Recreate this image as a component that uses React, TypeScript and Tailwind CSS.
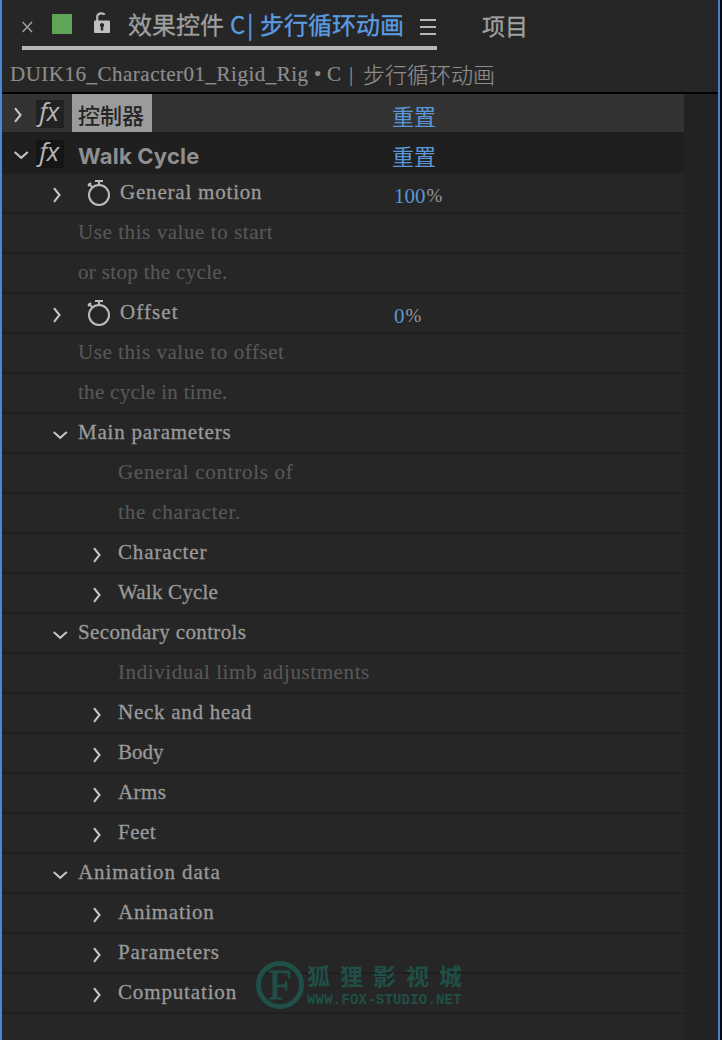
import type { ReactNode } from 'react';

interface Param {
  label: string;
  level: 1 | 2;
  tracking: string;
  arrow?: 'right' | 'down';
  value?: string;
}

const params: Param[] = [
  { label: 'General motion', level: 1, arrow: 'right', value: '100', tracking: 'tracking-[0.8px]' },
  { label: 'Use this value to start', level: 1, tracking: 'tracking-[0.57px]' },
  { label: 'or stop the cycle.', level: 1, tracking: 'tracking-[0.34px]' },
  { label: 'Offset', level: 1, arrow: 'right', value: '0', tracking: 'tracking-[1.1px]' },
  { label: 'Use this value to offset', level: 1, tracking: 'tracking-[0.55px]' },
  { label: 'the cycle in time.', level: 1, tracking: 'tracking-[0.28px]' },
  { label: 'Main parameters', level: 1, arrow: 'down', tracking: 'tracking-[0.78px]' },
  { label: 'General controls of', level: 2, tracking: 'tracking-[0.7px]' },
  { label: 'the character.', level: 2, tracking: 'tracking-[0.8px]' },
  { label: 'Character', level: 2, arrow: 'right', tracking: 'tracking-[0.85px]' },
  { label: 'Walk Cycle', level: 2, arrow: 'right', tracking: 'tracking-[0.2px]' },
  { label: 'Secondary controls', level: 1, arrow: 'down', tracking: 'tracking-[0.38px]' },
  { label: 'Individual limb adjustments', level: 2, tracking: 'tracking-[0.6px]' },
  { label: 'Neck and head', level: 2, arrow: 'right', tracking: 'tracking-[0.73px]' },
  { label: 'Body', level: 2, arrow: 'right', tracking: 'tracking-[0px]' },
  { label: 'Arms', level: 2, arrow: 'right', tracking: 'tracking-[0.4px]' },
  { label: 'Feet', level: 2, arrow: 'right', tracking: 'tracking-[0.5px]' },
  { label: 'Animation data', level: 1, arrow: 'down', tracking: 'tracking-[0.9px]' },
  { label: 'Animation', level: 2, arrow: 'right', tracking: 'tracking-[0.75px]' },
  { label: 'Parameters', level: 2, arrow: 'right', tracking: 'tracking-[0.85px]' },
  { label: 'Computation', level: 2, arrow: 'right', tracking: 'tracking-[0.85px]' },
];

function Chevron({ dir }: { dir: 'right' | 'down' }) {
  return (
    <svg className="h-4 w-4 shrink-0" viewBox="0 0 16 16" fill="none" stroke="#c4c4c4" strokeWidth="2.1">
      <path d={dir === 'right' ? 'M1 1.2 L6.5 8 L1 14.8' : 'M0.6 5 L7.2 10.8 L13.8 5'} />
    </svg>
  );
}

function Stopwatch() {
  return (
    <svg className="h-7 w-6 shrink-0" viewBox="0 0 24 28" fill="none" stroke="#bdbdbd" strokeWidth="2">
      <circle cx="12" cy="16" r="10" />
      <path d="M8 2 H16 M12 2 V6 M1.5 4.5 L4.8 7.8 M1 7 L4 4" />
    </svg>
  );
}

function FxBadge({ dark }: { dark?: boolean }) {
  return (
    <div
      className={`flex h-7 w-7 shrink-0 items-center justify-center font-['Open_Sans'] text-[26px] leading-7 text-[#b4b4b4] italic ${
        dark ? 'bg-[#151515]' : 'bg-[#222222]'
      }`}
    >
      <span className="-mt-1.5 -ml-0.5 tracking-[-0.5px]">fx</span>
    </div>
  );
}

function EffectRow({ open, children }: { open?: boolean; children: ReactNode }) {
  return (
    <div
      className={`flex h-10 w-[682px] border-b-2 pl-3 ${
        open ? 'border-[#1f1f1f] bg-[#1f1f1f]' : 'border-[#1e1e1e] bg-[#333333]'
      }`}
    >
      <div className="flex w-[22px] items-center pt-1">
        <Chevron dir={open ? 'down' : 'right'} />
      </div>
      <div className="flex w-9 items-center pt-0.5">
        <FxBadge dark={open} />
      </div>
      <div className="flex w-80">{children}</div>
      <span className="pt-[5px] text-[22px] leading-[38px] text-[#5b96d6]">重置</span>
    </div>
  );
}

function ParamRow({ label, level, tracking, arrow, value }: Param) {
  return (
    <div className="flex h-10 w-[682px] items-center border-b-2 border-[#1f1f1f]">
      <div className={`flex items-center pt-1 ${level === 1 ? 'w-[76px] pl-[51px]' : 'w-[116px] pl-[91px]'}`}>
        {arrow && <Chevron dir={arrow} />}
      </div>
      {value && (
        <div className="flex w-[42px] items-center pl-[9px]">
          <Stopwatch />
        </div>
      )}
      <span
        className={`pb-0.5 text-[21px] leading-9 whitespace-nowrap ${tracking} ${
          arrow ? 'text-[#9a9a9a] [-webkit-text-stroke:0.3px]' : 'text-[#585858] [-webkit-text-stroke:0.15px]'
        } ${value ? 'w-[274px]' : ''}`}
      >
        {label}
      </span>
      {value && (
        <span className="flex gap-px pt-1.5 text-[21px] leading-8">
          <span className="text-[#5b96d6]">{value}</span>
          <span className="text-[19px] text-[#999999]">%</span>
        </span>
      )}
    </div>
  );
}

function Watermark() {
  return (
    <div className="absolute top-[961px] left-[256px] flex text-[#1f4f46]">
      <div className="flex h-12 w-12 items-center justify-center rounded-full border-[5px] border-[#1f4f46] text-[42px] leading-10 [-webkit-text-stroke:0.8px]">
        F
      </div>
      <div className="flex flex-col pl-[3px]">
        <span className="mt-px h-[30px] font-['Noto_Sans_CJK_SC',sans-serif] text-[23px] leading-[27px] font-bold tracking-[10px] whitespace-nowrap">
          狐狸影视城
        </span>
        <span className="font-['Liberation_Mono',monospace] text-[14px] leading-4 font-bold tracking-[0.2px]">
          WWW.FOX-STUDIO.NET
        </span>
      </div>
    </div>
  );
}

export default function App() {
  return (
    <div className="relative flex h-[1040px] w-[722px] overflow-hidden bg-[#262626] font-['Liberation_Serif','Noto_Sans_CJK_SC',serif]">
      <div className="w-0.5 bg-[#4d86d1]" />

      <div className="flex w-[716px] flex-col">
        {/* Tabs */}
        <div className="flex h-[50px] pl-5 font-['Noto_Sans_CJK_SC',sans-serif] text-2xl">
          <div className="flex h-[50px] w-[415px] items-center border-b-4 border-[#b8b8b8]">
            <svg className="mt-2 h-3 w-[30px]" viewBox="0 0 30 12" fill="none" stroke="#a0a0a0" strokeWidth="1.5">
              <path d="M0.5 1 L10 11 M10 1 L0.5 11" />
            </svg>
            <div className="mt-0.5 h-5 w-5 bg-[#60a457]" />
            <svg className="ml-[22px] h-[22px] w-[34px]" viewBox="0 0 34 22" fill="none">
              <path d="M3.2 9 V5.2 C3.2 2.5 5 1.3 7.4 1.3 C9 1.3 10 1.7 10.8 2.6" stroke="#b8b8b8" strokeWidth="2.2" />
              <rect y="8.5" width="16" height="12.5" rx="1" fill="#c0c0c0" />
              <path d="M8 11 a2.2 2.2 0 0 1 1.2 4 V18.5 H6.8 V15 A2.2 2.2 0 0 1 8 11" fill="#262626" />
            </svg>
            <span className="pt-0.5 leading-[46px] whitespace-nowrap text-[#a0a0a0] [-webkit-text-stroke:0.3px]">
              效果控件
            </span>
            <span className="ml-1.5 flex pt-0.5 leading-[46px] whitespace-nowrap text-[#5b9be0] [-webkit-text-stroke:0.3px]">
              <span className="w-[17px]">C</span>
              <span className="w-[13px]">|</span>
              <span>步行循环动画</span>
            </span>
            <div className="mt-[7px] ml-auto flex w-[17px] flex-col gap-[5px] pr-px">
              <div className="h-0.5 bg-[#b8b8b8]" />
              <div className="h-0.5 bg-[#b8b8b8]" />
              <div className="h-0.5 bg-[#b8b8b8]" />
            </div>
          </div>
          <span className="ml-[45px] text-[23px] leading-[51px] text-[#a0a0a0] [-webkit-text-stroke:0.3px]">项目</span>
        </div>

        <div className="flex h-11 border-b-2 border-black pl-2 text-[21px] leading-[48px] whitespace-nowrap text-[#8c8c8c] [-webkit-text-stroke:0.2px]">
          <span className="w-[304px] tracking-[0.5px]">DUIK16_Character01_Rigid_Rig</span>
          <span className="w-[13px]">•</span>
          <span className="w-[22px]">C</span>
          <span className="w-3.5">|</span>
          <span className="font-['Noto_Sans_CJK_SC',sans-serif] text-[22px] leading-[46px] font-light">步行循环动画</span>
        </div>

        {/* Effects list, with the scroll gutter on the right */}
        <div className="flex flex-1">
          <div className="w-[682px]">
            <EffectRow>
              <span className="h-[38px] w-20 bg-[#9b9b9b] pl-1.5 font-['Noto_Sans_CJK_SC',sans-serif] text-[22px] leading-[41px] font-medium text-[#252525]">
                控制器
              </span>
            </EffectRow>
            <EffectRow open>
              <span className="pt-0.5 pl-1.5 font-['Inter',sans-serif] text-[22px] leading-10 font-bold tracking-[0.2px] text-[#8f8f8f]">
                Walk Cycle
              </span>
            </EffectRow>
            {params.map((param) => (
              <ParamRow key={param.label + param.level} {...param} />
            ))}
          </div>
          <div className="flex-1 bg-[#222222]" />
        </div>
      </div>

      <div className="w-0.5 bg-[#4d7fc4]" />
      <div className="w-0.5 bg-[#050b18]" />

      <Watermark />
    </div>
  );
}
